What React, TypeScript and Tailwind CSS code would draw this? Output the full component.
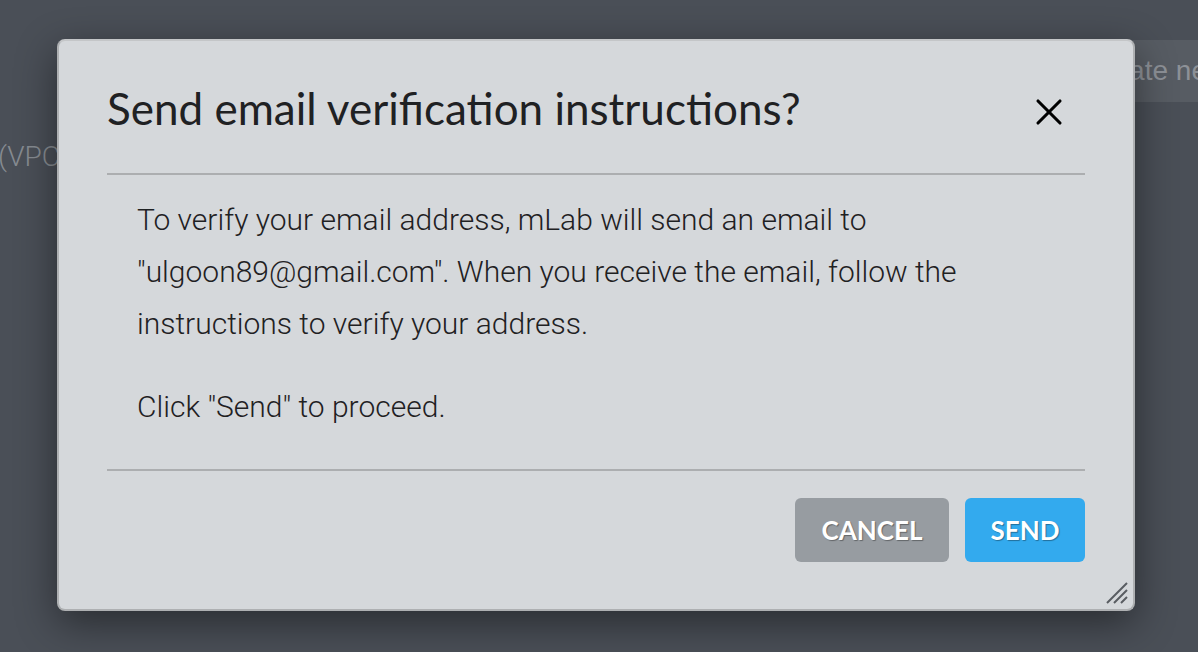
import { X } from "lucide-react";

function ResizeGrip() {
  return (
    <svg width="24" height="24" viewBox="0 0 24 24" className="absolute right-[4px] bottom-[4px]">
      <path d="M2 22 L22 2 M9 22 L22 9 M16 22 L22 16" stroke="#595d62" strokeWidth="2" />
    </svg>
  );
}

export default function App() {
  return (
    <div className="relative w-full h-[652px] overflow-hidden bg-[#4a4f57] font-['Roboto',sans-serif]">
      {/* page behind the dialog */}
      <div className="flex justify-end pt-[40px]">
        <div className="h-[62px] w-[130px] rounded-l-[6px] bg-[#575c63] pl-[16px] pt-[10px] text-[28px] text-[#8d9197] font-['Liberation_Sans',sans-serif] whitespace-nowrap overflow-hidden">
          Create new
        </div>
      </div>
      <div className="mt-[34px] -ml-[2px] text-[28px] font-light text-[#868b91]">(VPC) Virtual</div>

      {/* dialog */}
      <div className="absolute left-[57px] top-[39px] w-[1078px] h-[572px] rounded-[8px] border-2 border-[#aeb0b2] border-t-[#c4c6c8] bg-[#d5d8db] shadow-[0_12px_40px_rgba(0,0,0,0.45)] flex flex-col px-[48px]">
        <div className="h-[134px] flex items-center justify-between border-b-2 border-[#acaeb0]">
          <h2 className="font-['Lato',sans-serif] text-[44px] text-[#1f2123] mt-[2px]">
            Send email verification instructions?
          </h2>
          <X className="w-[44px] h-[44px] text-black mr-[14px] mt-[10px]" strokeWidth={1.7} />
        </div>
        <div className="pt-[19px] pb-[36px] pl-[30px] border-b-2 border-[#acaeb0] text-[30px] leading-[52px] font-light text-[#1f2123]">
          <p>
            To verify your email address, mLab will send an email to "ulgoon89@gmail.com". When you receive the email, follow the instructions to verify your address.
          </p>
          <p className="mt-[31px]">Click "Send" to proceed.</p>
        </div>
        <div className="flex justify-end gap-[16px] pt-[27px]">
          <button className="h-[64px] w-[154px] rounded-[6px] bg-[#979ca1] text-white font-['Lato',sans-serif] font-bold text-[26px] [text-shadow:1px_1px_1px_rgba(0,0,0,0.35)]">
            CANCEL
          </button>
          <button className="h-[64px] w-[120px] rounded-[6px] bg-[#33aaee] text-white font-['Lato',sans-serif] font-bold text-[26px] [text-shadow:1px_1px_1px_rgba(0,0,0,0.35)]">
            SEND
          </button>
        </div>
        <ResizeGrip />
      </div>
    </div>
  );
}
